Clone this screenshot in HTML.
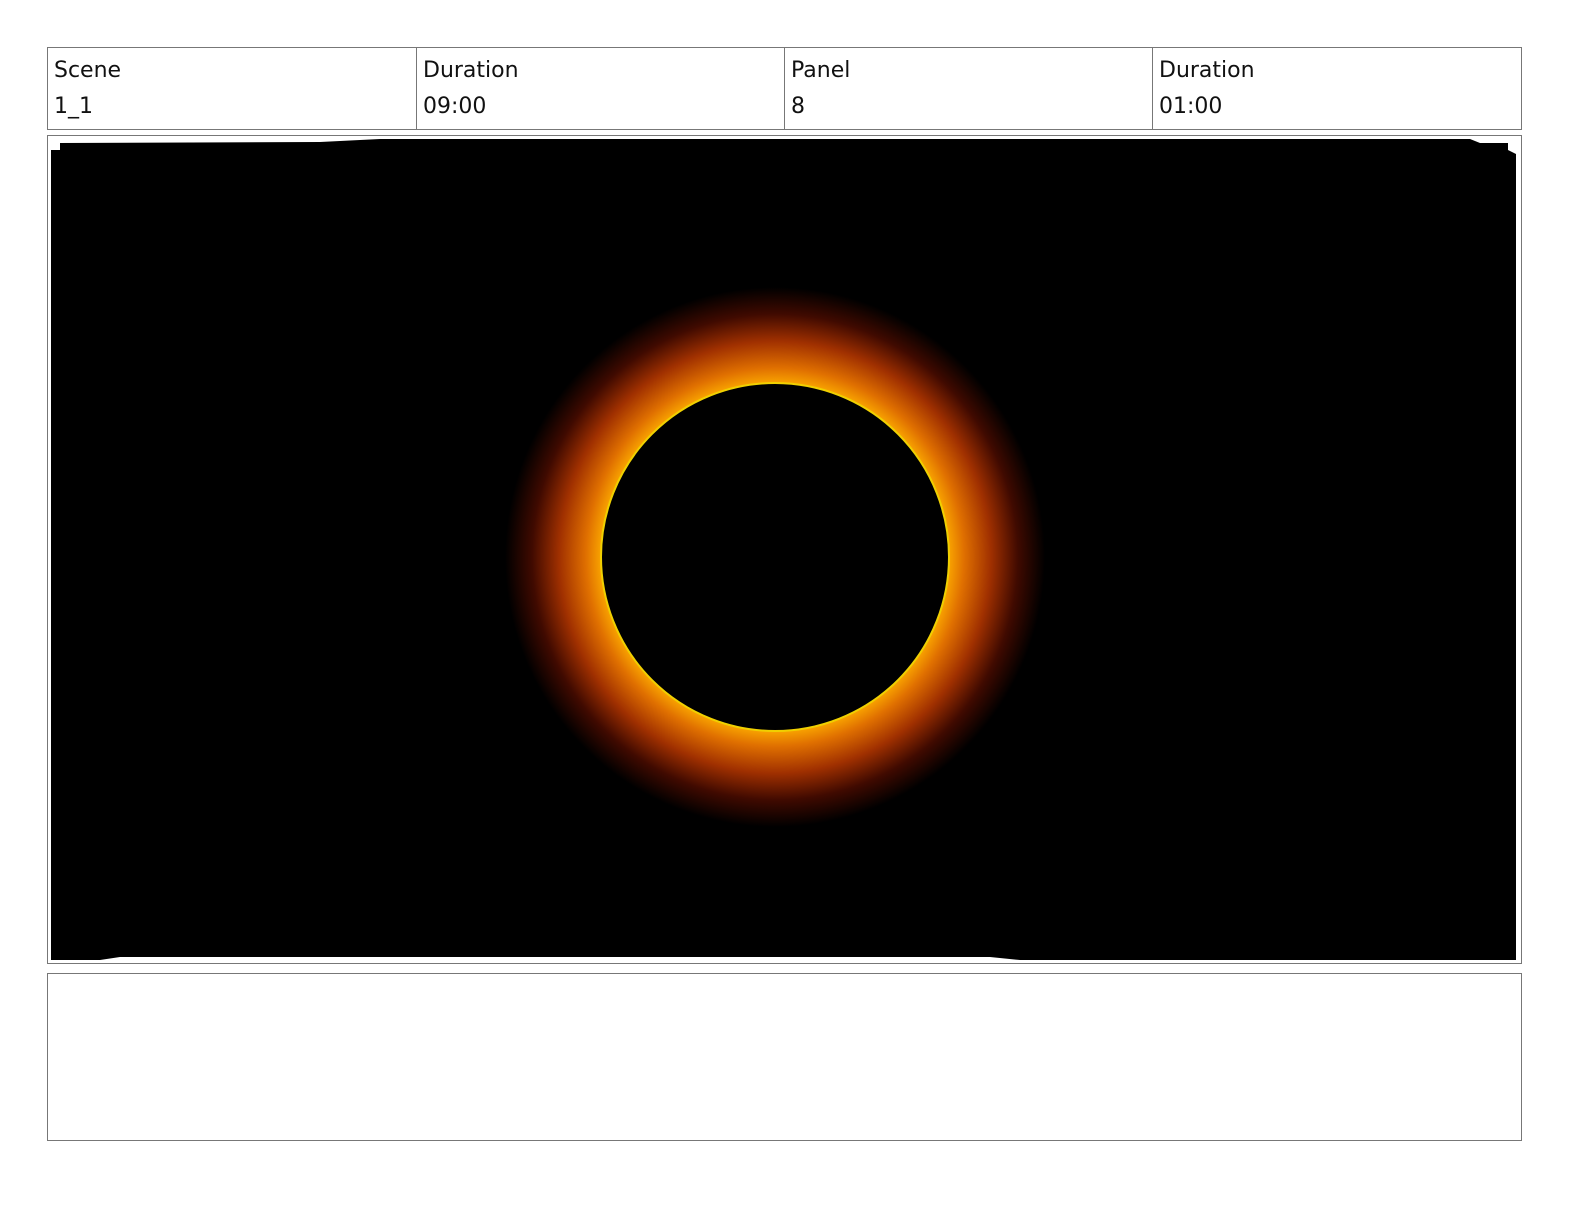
<!DOCTYPE html>
<html style="overflow:hidden"><head><style>
html,body{margin:0;padding:0;overflow:hidden}
body{width:1584px;height:1224px;background:#fff;position:relative;font-family:"DejaVu Sans","Liberation Sans",sans-serif}
.box{position:absolute;border:1px solid #777;box-sizing:border-box}
.cell{position:absolute;top:0;height:100%;border-left:1px solid #777;box-sizing:border-box;padding:5px 6px;font-size:22px;color:#111;line-height:36px}
</style></head><body>
<div class="box" style="left:47px;top:47px;width:1475px;height:83px">
<div class="cell" style="left:0;width:368px;border-left:none">Scene<br>1_1</div>
<div class="cell" style="left:368px;width:368px">Duration<br>09:00</div>
<div class="cell" style="left:736px;width:368px">Panel<br>8</div>
<div class="cell" style="left:1104px;width:370px">Duration<br>01:00</div>
</div>
<div class="box" style="left:47px;top:135px;width:1475px;height:829px"></div>
<svg style="position:absolute;left:0;top:0" width="1584" height="1224">
<defs><radialGradient id="g" cx="775" cy="557" r="270" gradientUnits="userSpaceOnUse">
<stop offset="0.63" stop-color="#ffb000"/>
<stop offset="0.7" stop-color="#e07000"/>
<stop offset="0.8" stop-color="#a03000"/>
<stop offset="0.9" stop-color="#400a00"/>
<stop offset="1" stop-color="#000"/></radialGradient></defs>
<path d="M51 150 L60 150 L60 143 L320 142 L380 139 L1470 139 L1480 143 L1508 143 L1508 150 L1516 154 L1516 960 L1020 960 L990 957 L120 957 L100 960 L51 960 Z" fill="#000"/>
<circle cx="775" cy="557" r="270" fill="url(#g)"/>
<circle cx="775" cy="557" r="174" fill="#000" stroke="#f0d000" stroke-width="2"/>
</svg>
<div class="box" style="left:47px;top:973px;width:1475px;height:168px"></div>
</body></html>
